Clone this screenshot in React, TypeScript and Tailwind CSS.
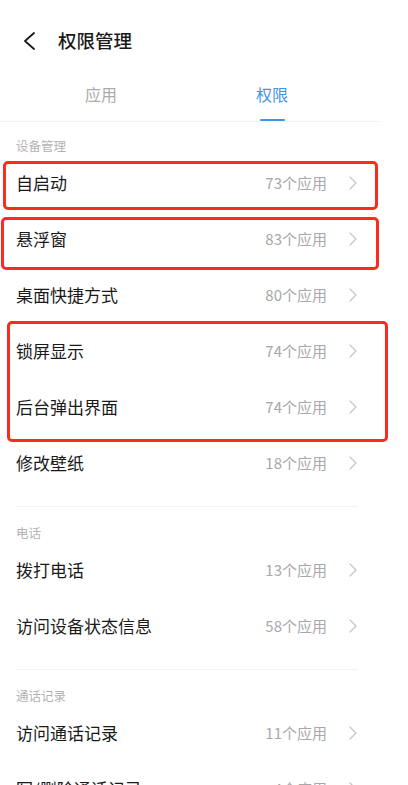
import React from "react";

type Row = { label: string; count: string };

const sections: { title: string; rows: Row[] }[] = [
  {
    title: "设备管理",
    rows: [
      { label: "自启动", count: "73个应用" },
      { label: "悬浮窗", count: "83个应用" },
      { label: "桌面快捷方式", count: "80个应用" },
      { label: "锁屏显示", count: "74个应用" },
      { label: "后台弹出界面", count: "74个应用" },
      { label: "修改壁纸", count: "18个应用" },
    ],
  },
  {
    title: "电话",
    rows: [
      { label: "拨打电话", count: "13个应用" },
      { label: "访问设备状态信息", count: "58个应用" },
    ],
  },
  {
    title: "通话记录",
    rows: [
      { label: "访问通话记录", count: "11个应用" },
      { label: "写/删除通话记录", count: "4个应用" },
    ],
  },
];

function Chevron() {
  return (
    <svg width="8" height="14" viewBox="0 0 8 14" fill="none">
      <path d="M1 1L7 7L1 13" stroke="#c6c6c6" strokeWidth="1.3" strokeLinecap="round" strokeLinejoin="round" />
    </svg>
  );
}

export default function App() {
  return (
    <div
      className="relative h-[785px] w-[408px] overflow-hidden bg-white"
      style={{ fontFamily: '"Noto Sans CJK SC", "Noto Sans", sans-serif' }}
    >
      {/* title bar */}
      <div className="flex h-[82px] items-center">
        <div className="ml-[23px] flex w-[12px] items-center">
          <svg width="12" height="18" viewBox="0 0 12 18" fill="none">
            <path d="M11 1L2 9L11 17" stroke="#1a1a1a" strokeWidth="1.8" strokeLinecap="round" strokeLinejoin="round" />
          </svg>
        </div>
        <h1 className="ml-[23px] text-[18.5px] font-medium text-[#1a1a1a]">权限管理</h1>
      </div>

      {/* tabs */}
      <div className="flex w-[380px] border-b border-[#f2f2f2]">
        <div className="ml-[41px] flex w-[120px] flex-col items-center">
          <span className="text-[16px] leading-[24px] text-[#ababab]">应用</span>
        </div>
        <div className="ml-[51px] flex w-[120px] flex-col items-center">
          <span className="text-[16px] leading-[24px] text-[#3f95e8]">权限</span>
          <span className="mt-[13px] h-[2px] w-[25px] rounded-full bg-[#3f95e8]" />
        </div>
      </div>

      {sections.map((section, si) => (
        <div key={section.title}>
          {si > 0 && <div className="mx-4 mt-[15px] h-px w-[342px] bg-[#f3f3f3]" />}
          <div className={si === 0 ? "flex h-[33px] items-end pl-4" : "flex h-[35px] items-end pl-4"}>
            <span className="text-[12.5px] leading-[18px] text-[#b3b3b3]">{section.title}</span>
          </div>
          {section.rows.map((row) => (
            <div key={row.label} className="flex h-[56px] items-center pl-4 pr-[51px]">
              <span className="flex-1 text-[17px] text-[#1a1a1a]">{row.label}</span>
              <span className="mr-[22px] text-[15px] text-[#a8a8a8]">{row.count}</span>
              <Chevron />
            </div>
          ))}
        </div>
      ))}

      {/* red annotation boxes */}
      <div className="absolute left-[3px] top-[161px] h-[49px] w-[375px] rounded-[5px] border-[3px] border-[#fb2b1d]" />
      <div className="absolute left-[1px] top-[217px] h-[53px] w-[378px] rounded-[5px] border-[3px] border-[#fb2b1d]" />
      <div className="absolute left-[7px] top-[321px] h-[121px] w-[381px] rounded-[5px] border-[3px] border-[#fb2b1d]" />
    </div>
  );
}
